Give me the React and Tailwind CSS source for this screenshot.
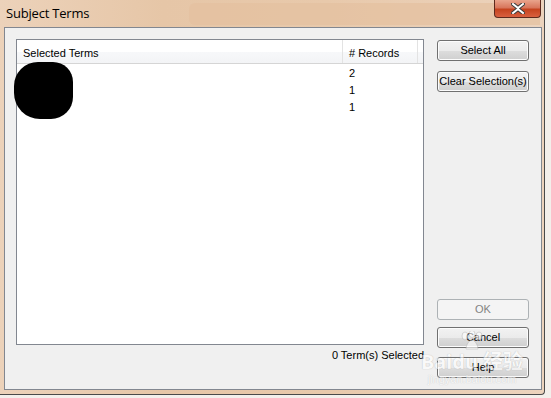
export default function App() {
  const rows = [
    { id: 1, term: '', records: 2 },
    { id: 2, term: '', records: 1 },
    { id: 3, term: '', records: 1 },
  ];

  const btn =
    "h-[21px] w-full whitespace-nowrap rounded-[3px] border border-[#707070] bg-[linear-gradient(#f2f2f2_0%,#ebebeb_50%,#dddddd_51%,#cfcfcf_100%)] text-[11px] leading-none text-black shadow-[inset_0_0_0_1px_#fcfcfc]";

  return (
    <div className="w-[551px] h-[398px] overflow-hidden bg-[#f3efeb] font-['Liberation_Sans',Arial,sans-serif]">
      <div className="relative w-[545px] h-[395px] flex flex-col border-r border-b border-[#4a4a4a] rounded-br-[4px] pl-[4px] pr-[2px] bg-[linear-gradient(90deg,#ecd2ba_0%,#e6c6a7_30%,#e8c9ab_60%,#ecd3bd_100%)]">
        {/* title bar */}
        <div className="relative h-[27px] flex items-start">
          <div className="absolute left-[185px] top-[3px] right-[2px] h-[22px] rounded-l-[6px] bg-[#e4c1a0] opacity-70" />
          <span className="relative mt-[5px] ml-[2px] text-[13px] leading-[16px] text-black font-['Open_Sans',sans-serif] tracking-[-0.2px]">
            Subject Terms
          </span>
          <button className="absolute right-[1px] top-0 w-[47px] h-[18px] rounded-b-[4px] border border-t-0 border-[#5d2a1e] bg-[linear-gradient(#e9a48c_0%,#d8765c_45%,#c5431f_55%,#d9603f_100%)] flex items-center justify-center">
            <svg width="14" height="11" viewBox="0 0 14 11">
              <path
                d="M2 1l5 4 5-4M2 10l5-4 5 4"
                stroke="#3b3b3b"
                strokeWidth="4"
                fill="none"
                strokeLinecap="square"
              />
              <path
                d="M2 1l5 4 5-4M2 10l5-4 5 4"
                stroke="#ffffff"
                strokeWidth="2"
                fill="none"
                strokeLinecap="square"
              />
            </svg>
          </button>
        </div>

        {/* client area */}
        <div className="w-[538px] h-[363px] border border-[#828790] bg-[#f0f0f0] flex pl-[11px] pr-[11px]">
          <div className="w-[408px] pt-[11px] flex flex-col">
            <div className="relative h-[306px] border border-[#828790] bg-white">
              <div className="flex h-[24px] border-b border-[#d5d5d5] bg-[linear-gradient(#ffffff_0%,#ffffff_50%,#f7f8fa_51%,#f3f4f6_100%)] text-[11px] text-black">
                <div className="w-[326px] border-r border-[#e3e3e3] pl-[6px] pt-[3px] flex items-center">
                  Selected Terms
                </div>
                <div className="w-[75px] border-r border-[#e3e3e3] pl-[6px] pt-[3px] flex items-center">
                  # Records
                </div>
              </div>
              <div className="pt-[1px]">
                {rows.map((r) => (
                  <div key={r.id} className="flex h-[17px] items-center text-[11px] text-black">
                    <div className="w-[326px] pl-[6px]">{r.term}</div>
                    <div className="pl-[6px]">{r.records}</div>
                  </div>
                ))}
              </div>
              <div className="absolute left-[-3px] top-[22px] w-[59px] h-[57px] rounded-[24px_20px_22px_26px] bg-black" />
            </div>
            <div className="mt-[3px] text-right text-[11px] leading-[14px] text-black">
              0 Term(s) Selected
            </div>
          </div>

          <div className="ml-[13px] w-[92px] pt-[12px] pb-[11px] flex flex-col">
            <button className={btn}>Select All</button>
            <button className={btn + " mt-[10px]"}>Clear Selection(s)</button>
            <div className="flex-1" />
            <button className="h-[21px] w-full rounded-[3px] border border-[#adb2b5] bg-[#f4f4f4] text-[11px] leading-none text-[#838383]">
              OK
            </button>
            <button className={btn + " mt-[7px]"}>Cancel</button>
            <button className={btn + " mt-[9px]"}>Help</button>
          </div>
        </div>

        {/* watermark */}
        <div className="absolute left-[421px] top-[331px] flex flex-col items-center pointer-events-none opacity-60">
          <svg width="28" height="20" viewBox="0 0 28 20">
            <g fill="#ffffff" stroke="#b5b5b5" strokeWidth="0.8">
              <ellipse cx="7" cy="5" rx="3" ry="4" />
              <ellipse cx="14" cy="3" rx="3" ry="3.5" />
              <ellipse cx="21" cy="5" rx="3" ry="4" />
              <path d="M8 18c0-5 4-9 6-9s6 4 6 9z" />
            </g>
          </svg>
          <span className="text-[20px] leading-[22px] font-bold text-white [text-shadow:0_0_1px_#8a8a8a] font-['Noto_Sans','Noto_Sans_CJK_SC',sans-serif]">
            Baidu 经验
          </span>
          <span className="text-[11px] leading-[12px] text-white [text-shadow:0_0_1px_#a0a0a0]">
            jingyan.baidu.com
          </span>
        </div>
      </div>
    </div>
  );
}
